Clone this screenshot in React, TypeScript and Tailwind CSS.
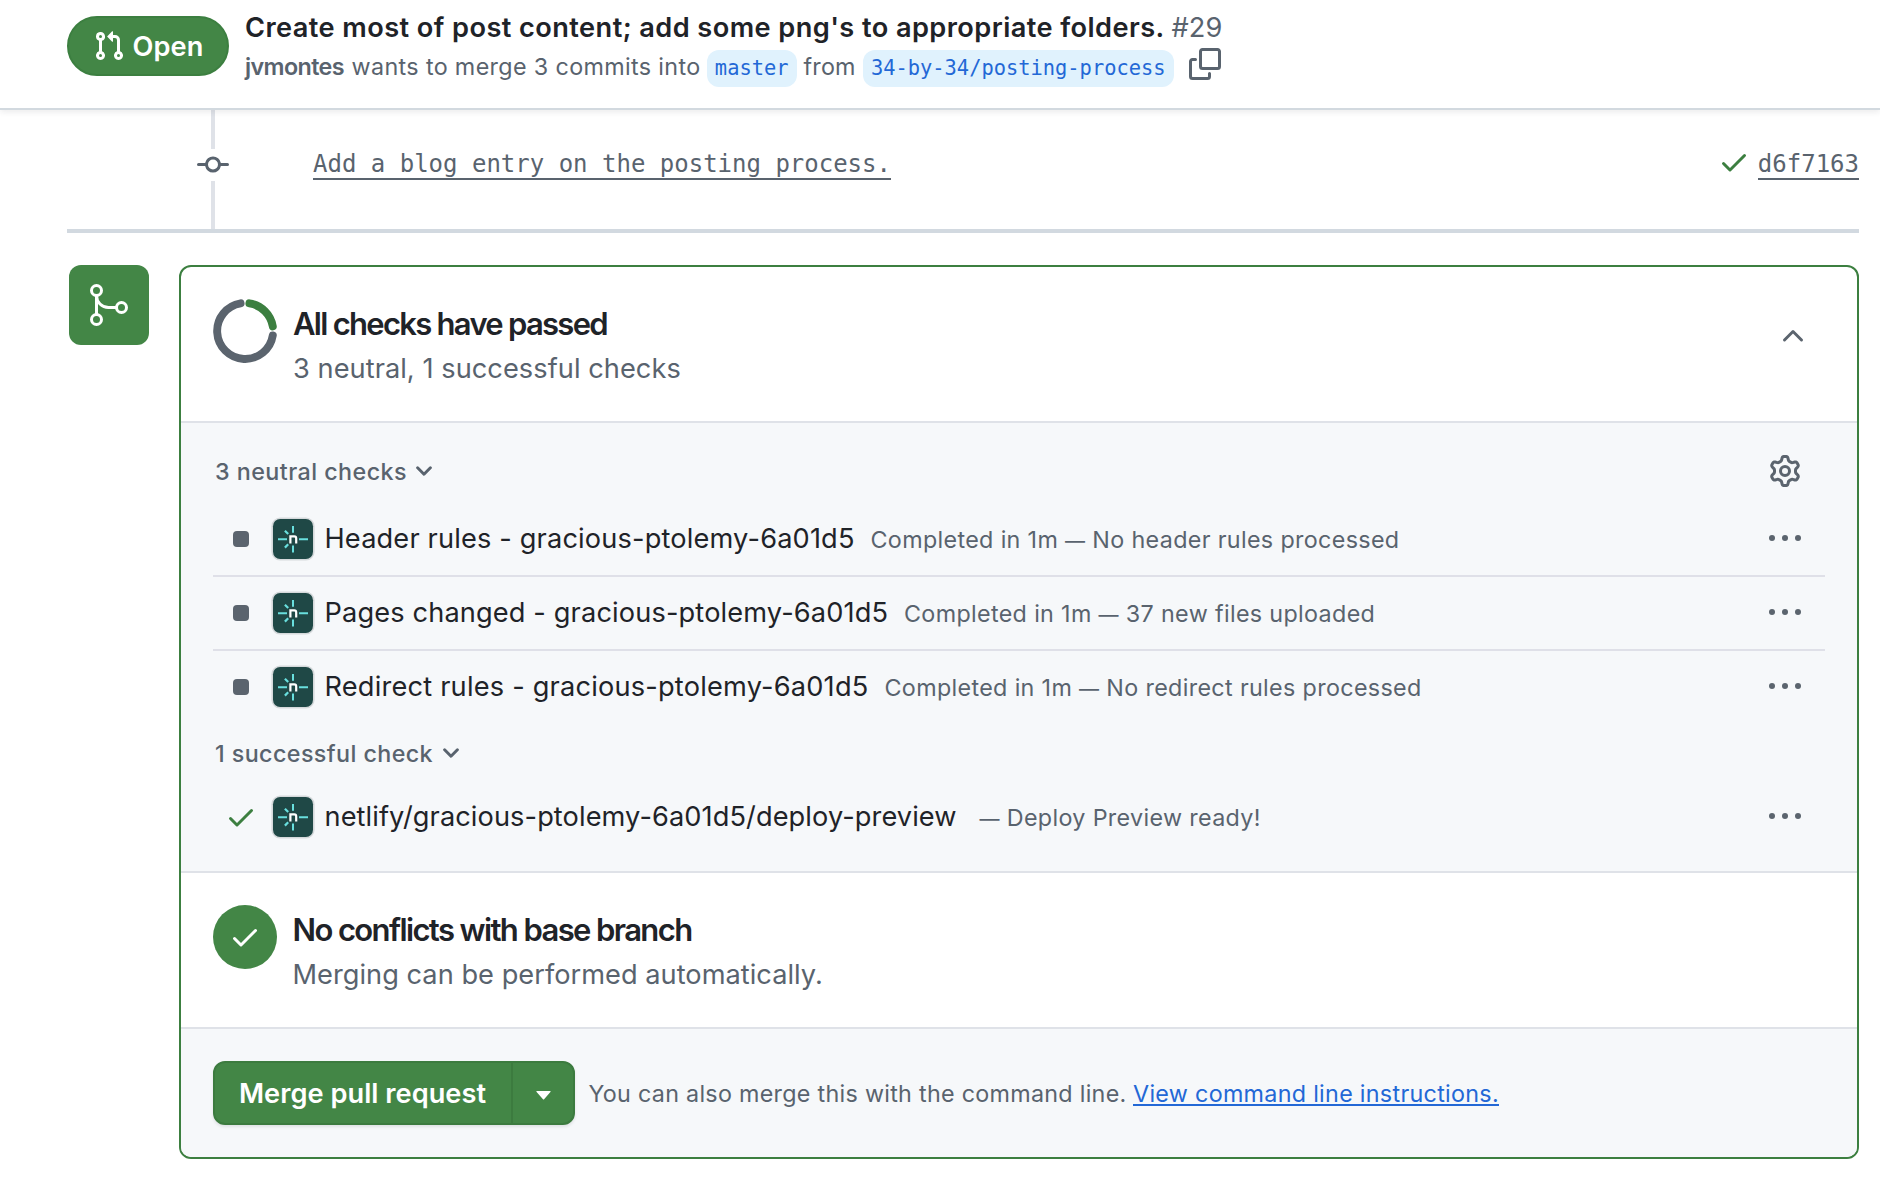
import type { ReactNode } from "react";

const CHECK =
  "M13.78 4.22a.75.75 0 0 1 0 1.06l-7.25 7.25a.75.75 0 0 1-1.06 0L2.22 9.28a.751.751 0 0 1 .018-1.042.751.751 0 0 1 1.042-.018L6 10.94l6.72-6.72a.75.75 0 0 1 1.06 0Z";
const PULL_REQUEST =
  "M1.5 3.25a2.25 2.25 0 1 1 3 2.122v5.256a2.251 2.251 0 1 1-1.5 0V5.372A2.25 2.25 0 0 1 1.5 3.25Zm5.677-.177L9.573.677A.25.25 0 0 1 10 .854V2.5h1A2.5 2.5 0 0 1 13.5 5v5.628a2.251 2.251 0 1 1-1.5 0V5a1 1 0 0 0-1-1h-1v1.646a.25.25 0 0 1-.427.177L7.177 3.427a.25.25 0 0 1 0-.354ZM3.75 2.5a.75.75 0 1 0 0 1.5.75.75 0 0 0 0-1.5Zm0 9.5a.75.75 0 1 0 0 1.5.75.75 0 0 0 0-1.5Zm8.25.75a.75.75 0 1 0 1.5 0 .75.75 0 0 0-1.5 0Z";
const COMMIT =
  "M11.93 8.5a4.002 4.002 0 0 1-7.86 0H.75a.75.75 0 0 1 0-1.5h3.32a4.002 4.002 0 0 1 7.86 0h3.32a.75.75 0 0 1 0 1.5Zm-1.43-.75a2.5 2.5 0 1 0-5 0 2.5 2.5 0 0 0 5 0Z";
const COPY =
  "M0 6.75C0 5.784.784 5 1.75 5h1.5a.75.75 0 0 1 0 1.5h-1.5a.25.25 0 0 0-.25.25v7.5c0 .138.112.25.25.25h7.5a.25.25 0 0 0 .25-.25v-1.5a.75.75 0 0 1 1.5 0v1.5A1.75 1.75 0 0 1 9.25 16h-7.5A1.75 1.75 0 0 1 0 14.25ZM5 1.75C5 .784 5.784 0 6.75 0h7.5C15.216 0 16 .784 16 1.75v7.5A1.75 1.75 0 0 1 14.25 11h-7.5A1.75 1.75 0 0 1 5 9.25Zm1.75-.25a.25.25 0 0 0-.25.25v7.5c0 .138.112.25.25.25h7.5a.25.25 0 0 0 .25-.25v-7.5a.25.25 0 0 0-.25-.25Z";
const CHEVRON_UP =
  "M3.22 10.53a.749.749 0 0 1 0-1.06l4.25-4.25a.749.749 0 0 1 1.06 0l4.25 4.25a.749.749 0 1 1-1.06 1.06L8 6.811 4.28 10.53a.749.749 0 0 1-1.06 0Z";
const GEAR =
  "M8 0a8.2 8.2 0 0 1 .701.031C9.444.095 9.99.645 10.16 1.29l.288 1.107c.018.066.079.158.212.224.231.114.454.243.668.386.123.082.233.09.299.071l1.103-.303c.644-.176 1.392.021 1.82.63.27.385.506.792.704 1.218.315.675.111 1.422-.364 1.891l-.814.806c-.049.048-.098.147-.088.294.016.257.016.515 0 .772-.01.147.038.246.088.294l.814.806c.475.469.679 1.216.364 1.891a7.977 7.977 0 0 1-.704 1.217c-.428.61-1.176.807-1.82.63l-1.102-.302c-.067-.019-.177-.011-.3.071a5.909 5.909 0 0 1-.668.386c-.133.066-.194.158-.211.224l-.29 1.106c-.168.646-.715 1.196-1.458 1.26a8.006 8.006 0 0 1-1.402 0c-.743-.064-1.289-.614-1.458-1.26l-.289-1.106c-.018-.066-.079-.158-.212-.224a5.738 5.738 0 0 1-.668-.386c-.123-.082-.233-.09-.299-.071l-1.103.303c-.644.176-1.392-.021-1.82-.63a8.12 8.12 0 0 1-.704-1.218c-.315-.675-.111-1.422.363-1.891l.815-.806c.05-.048.098-.147.088-.294a6.214 6.214 0 0 1 0-.772c.01-.147-.038-.246-.088-.294l-.815-.806C.635 6.045.431 5.298.746 4.623a7.92 7.92 0 0 1 .704-1.217c.428-.61 1.176-.807 1.82-.63l1.102.302c.067.019.177.011.3-.071.214-.143.437-.272.668-.386.133-.066.194-.158.211-.224l.29-1.106C6.009.645 6.556.095 7.299.03 7.53.01 7.764 0 8 0Zm-.571 1.525c-.036.003-.108.036-.137.146l-.289 1.105c-.147.561-.549.967-.998 1.189-.173.086-.34.183-.5.29-.417.278-.97.423-1.529.27l-1.103-.303c-.109-.03-.175.016-.195.045-.22.312-.412.644-.573.99-.014.031-.021.11.059.19l.815.806c.411.406.562.957.53 1.456a4.709 4.709 0 0 0 0 .582c.032.499-.119 1.05-.53 1.456l-.815.806c-.081.08-.073.159-.059.19.162.346.353.677.573.989.02.03.085.076.195.046l1.102-.303c.56-.153 1.113-.008 1.53.27.161.107.328.204.501.29.447.222.85.629.997 1.189l.289 1.105c.029.109.101.143.137.146a6.6 6.6 0 0 0 1.142 0c.036-.003.108-.036.137-.146l.289-1.105c.147-.561.549-.967.998-1.189.173-.086.34-.183.5-.29.417-.278.97-.423 1.529-.27l1.103.303c.109.029.175-.016.195-.045.22-.313.411-.644.573-.99.014-.031.021-.11-.059-.19l-.815-.806c-.411-.406-.562-.957-.53-1.456a4.709 4.709 0 0 0 0-.582c-.032-.499.119-1.05.53-1.456l.815-.806c.081-.08.073-.159.059-.19a6.464 6.464 0 0 0-.573-.989c-.02-.03-.085-.076-.195-.046l-1.102.303c-.56.153-1.113.008-1.53-.27a4.44 4.44 0 0 0-.501-.29c-.447-.222-.85-.629-.997-1.189l-.289-1.105c-.029-.11-.101-.143-.137-.146a6.6 6.6 0 0 0-1.142 0ZM11 8a3 3 0 1 1-6 0 3 3 0 0 1 6 0ZM9.5 8a1.5 1.5 0 1 0-3.001.001A1.5 1.5 0 0 0 9.5 8Z";

function Octicon({ d, className = "" }: { d: string; className?: string }) {
  return (
    <svg viewBox="0 0 16 16" fill="currentColor" className={`size-8 shrink-0 ${className}`}>
      <path d={d} />
    </svg>
  );
}

function SmallChevron({ className = "" }: { className?: string }) {
  return (
    <svg viewBox="0 0 16 11" fill="none" stroke="currentColor" strokeWidth="2.9" strokeLinecap="round" strokeLinejoin="round" className={`h-[11px] w-4 ${className}`}>
      <path d="M1.6 1.7 8 8.3l6.4-6.6" />
    </svg>
  );
}

function MergeGlyph() {
  return (
    <svg viewBox="0 0 24 24" fill="none" stroke="currentColor" strokeWidth="1.5" className="size-12">
      <circle cx="5.75" cy="4.75" r="2.5" />
      <circle cx="5.75" cy="19.25" r="2.5" />
      <circle cx="18.25" cy="13.25" r="2.5" />
      <path d="M5.75 7.25v9.5M5.75 7.25c0 3.3 2.7 6 6 6h4" />
    </svg>
  );
}

function ChecksRing() {
  return (
    <svg viewBox="0 0 64 64" fill="none" className="size-16 shrink-0">
      <path d="M36.4 4.35A28 28 0 0 1 59.8 27.4" stroke="#3c7f40" strokeWidth="7.9" strokeLinecap="round" />
      <path d="M59.8 36.4A28 28 0 1 1 27.6 4.35" stroke="#5b646e" strokeWidth="7.9" strokeLinecap="round" />
    </svg>
  );
}

function NetlifyAvatar() {
  return (
    <svg viewBox="0 0 42 42" fill="none" className="ml-[-1px] size-[42px] shrink-0 overflow-visible">
      <rect x="-0.6" y="-0.6" width="43.2" height="43.2" rx="8.8" fill="#d5d9db" />
      <rect x="1" y="1" width="40" height="40" rx="7.2" fill="#1f4846" />
      <g stroke="#69dfde" strokeWidth="2">
        <path d="M6 21.2h9M27 21.2h9M21 8v6.8M21 27.4v7.2" />
        <path d="m12.9 12.7 3.3 3.3M12.9 29.6l3.3-3.3" strokeWidth="2.2" />
      </g>
      <path d="M18.4 25.6v-7.2h3.9c1.3 0 1.9.7 1.9 2v5.2" stroke="#fff" strokeWidth="2.2" />
    </svg>
  );
}

function Kebab() {
  return (
    <span className="mb-0.5 ml-auto flex gap-[7px] pr-6">
      <i className="size-1.5 rounded-full bg-[#5b646e]" />
      <i className="size-1.5 rounded-full bg-[#5b646e]" />
      <i className="size-1.5 rounded-full bg-[#5b646e]" />
    </span>
  );
}

type Check = { name: string; nameClass: string; timing: string; detail: string };

const NEUTRAL: Check[] = [
  {
    name: "Header rules - gracious-ptolemy-6a01d5",
    nameClass: "w-[546px] tracking-[0.16px]",
    timing: "Completed in 1m ",
    detail: " No header rules processed",
  },
  {
    name: "Pages changed - gracious-ptolemy-6a01d5",
    nameClass: "w-[579.5px] tracking-[0.14px]",
    timing: "Completed in 1m ",
    detail: " 37 new files uploaded",
  },
  {
    name: "Redirect rules - gracious-ptolemy-6a01d5",
    nameClass: "w-[560px] tracking-[0.2px]",
    timing: "Completed in 1m ",
    detail: " No redirect rules processed",
  },
];

function CheckRow({ check, status, className = "" }: { check: Check; status: ReactNode; className?: string }) {
  return (
    <li className={`flex h-[74px] items-center border-b-2 ${className}`}>
      <span className="flex w-[60px] shrink-0 items-center pl-3">{status}</span>
      <NetlifyAvatar />
      <span className={`ml-[10.5px] shrink-0 whitespace-nowrap text-[27.2px] leading-9 text-[#1f2328] ${check.nameClass}`}>
        {check.name}
      </span>
      <span className="mt-[3px] whitespace-pre text-[23.3px] leading-9 tracking-[0.345px] text-[#59636e]">
        {check.timing}
        <span className="text-[20px]">—</span>
        {check.detail}
      </span>
      <Kebab />
    </li>
  );
}

function Header() {
  return (
    <header className="relative flex h-[110px] items-start border-b-2 border-[#d2d9df] bg-white pl-[67px] shadow-[0_2px_6px_rgba(31,35,40,0.09)]">
      <div className="mt-4 flex h-[60px] w-[162px] items-center rounded-full border-2 border-[#3c7f40] bg-[#438646] pl-6 text-white">
        <Octicon d={PULL_REQUEST} />
        <span className="mt-0.5 ml-[7.5px] text-[27.2px] font-semibold leading-9 tracking-[0.1px]">Open</span>
      </div>
      <div className="ml-4 pt-2.5">
        <h1 className="flex whitespace-nowrap text-[27.2px] leading-9 text-[#1f2328]">
          <span className="font-semibold tracking-[0.417px]">
            Create most of post content; add some png's to appropriate folders.
          </span>
          <span className="ml-[7px] text-[#59636e]">#29</span>
        </h1>
        <div className="mt-1 flex h-[37px] items-start whitespace-nowrap text-[23.3px] leading-[33px] text-[#59636e]">
          <span className="font-semibold tracking-[-0.6px]">jvmontes</span>
          <span className="ml-[7.6px] tracking-[0.36px]">wants to merge 3 commits into</span>
          <BranchName>master</BranchName>
          <span className="ml-[7px] mr-px tracking-[0.175px]">from</span>
          <BranchName>34-by-34/posting-process</BranchName>
          <Octicon d={COPY} className="-mt-0.5 ml-[15px]" />
        </div>
      </div>
    </header>
  );
}

function BranchName({ children }: { children: ReactNode }) {
  return (
    <span className="ml-[6.3px] h-[37px] rounded-xl bg-[#e0f2fd] px-2 font-['DejaVu_Sans_Mono',monospace] text-[20.4px] leading-[37px] text-[#2368d6]">
      {children}
    </span>
  );
}

function CommitRow() {
  return (
    <section className="mr-[21px] ml-[67px] flex h-[123px] border-b-4 border-[#d2d9e0] font-['DejaVu_Sans_Mono',monospace] text-2xl text-[#59636e]">
      <div className="ml-[130px] flex w-8 flex-col items-center">
        <span className="h-[39px] w-1 bg-[#dfe2e8]" />
        <Octicon d={COMMIT} />
        <span className="w-1 flex-1 bg-[#dfe2e8]" />
      </div>
      <a className="mt-[38px] ml-[84px] h-8 border-b-2 border-[#59636e] leading-8">
        Add a blog entry on the posting process.
      </a>
      <Octicon d={CHECK} className="mt-9 ml-auto text-[#3c7f40]" />
      <a className="mt-[38px] ml-2 h-8 border-b-2 border-[#59636e] leading-8">d6f7163</a>
    </section>
  );
}

function GroupTitle({ children, className = "" }: { children: ReactNode; className?: string }) {
  return (
    <h3 className={`flex items-center whitespace-nowrap text-[23.3px] font-medium leading-8 text-[#59636e] ${className}`}>
      {children}
    </h3>
  );
}

function MergePanel() {
  return (
    <div className="h-[894px] w-[1680px] overflow-hidden rounded-xl border-2 border-[#3c7f40] bg-white">
      <section className="flex h-[154px] items-start pt-8 pl-8">
        <ChecksRing />
        <div className="ml-4 whitespace-nowrap">
          <h2 className="mt-[7px] text-[31px] font-semibold leading-9 tracking-[-1.72px] text-[#1f2328]">
            All checks have passed
          </h2>
          <p className="mt-[9px] text-[27.2px] leading-9 tracking-[0.051px] text-[#59636e]">
            3 neutral, 1 successful checks
          </p>
        </div>
        <Octicon d={CHEVRON_UP} className="mt-[21px] mr-12 ml-auto text-[#5b646e]" />
      </section>

      <section className="h-[452px] border-y-2 border-[#dfe2e8] bg-[#f6f8fa] pr-8 pl-8">
        <div className="flex items-start justify-between">
          <GroupTitle className="mt-[32.5px] ml-[2px] tracking-[0.447px]">
            3 neutral checks
            <SmallChevron className="ml-[9px]" />
          </GroupTitle>
          <Octicon d={GEAR} className="mt-8 mr-6 text-[#5b646e]" />
        </div>
        <ul className="mt-[15.5px]">
          {NEUTRAL.map((check, i) => (
            <CheckRow
              key={check.name}
              check={check}
              status={<span className="ml-2 size-4 rounded-[4px] bg-[#5b646e]" />}
              className={i < 2 ? "border-[#dfe0e8]" : "border-transparent"}
            />
          ))}
        </ul>
        <GroupTitle className="mt-[12.5px] ml-[2px] tracking-[0.41px]">
          1 successful check
          <SmallChevron className="ml-[10px]" />
        </GroupTitle>
        <ul className="mt-[11px]">
          <CheckRow
            check={{
              name: "netlify/gracious-ptolemy-6a01d5/deploy-preview",
              nameClass: "w-[655px] tracking-[0.09px]",
              timing: "",
              detail: " Deploy Preview ready!",
            }}
            status={<Octicon d={CHECK} className="text-[#3c7f40]" />}
            className="border-transparent"
          />
        </ul>
      </section>

      <section className="flex h-[154px] items-start pt-8 pl-8">
        <span className="flex size-16 items-center justify-center rounded-full bg-[#438646] text-white">
          <Octicon d={CHECK} />
        </span>
        <div className="ml-[15.5px] whitespace-nowrap">
          <h2 className="mt-[7px] text-[31px] font-semibold leading-9 tracking-[-1.61px] text-[#1f2328]">
            No conflicts with base branch
          </h2>
          <p className="mt-[9px] text-[27.2px] leading-9 tracking-[0.027px] text-[#59636e]">
            Merging can be performed automatically.
          </p>
        </div>
      </section>

      <section className="flex h-[130px] items-start border-t-2 border-[#dfe2e8] bg-[#f6f8fa] pt-8 pl-8 text-[23.3px] text-[#59636e]">
        <div className="flex h-16 w-[362px] rounded-xl border-2 border-[#3c7b3f] bg-[#438646] text-white shadow-[0_2px_3px_rgba(31,35,40,0.1)]">
          <button className="w-[298px] border-r-2 border-[#3c7b3f] pt-0.5 pl-6 text-left text-[27.2px] font-semibold tracking-[0.03px]">
            Merge pull request
          </button>
          <button className="flex flex-1 items-center justify-center">
            <svg viewBox="0 0 15 9" fill="currentColor" className="mt-1 h-[9px] w-[15px]">
              <path d="M1 0h13c.6 0 .8.6.4 1L8.1 8.2c-.3.3-.8.3-1.1 0L.6 1C.2.6.4 0 1 0Z" />
            </svg>
          </button>
        </div>
        <p className="mt-[17px] ml-[13.5px] whitespace-nowrap leading-8">
          <span className="tracking-[0.288px]">You can also merge this with the command line.</span>
        </p>
        <a className="mt-[17px] ml-[6.5px] h-7 whitespace-nowrap border-b-2 border-[#2368d6] leading-8 tracking-[0.3px] text-[#2368d6]">
          View command line instructions.
        </a>
      </section>
    </div>
  );
}

export default function App() {
  return (
    <div className="h-[1184px] w-[1880px] overflow-hidden bg-white font-[Inter,sans-serif]">
      <Header />
      <CommitRow />
      <main className="mt-8 ml-[69px] flex items-start gap-[30px]">
        <div className="flex size-20 items-center justify-center rounded-xl bg-[#438646] text-white">
          <MergeGlyph />
        </div>
        <MergePanel />
      </main>
    </div>
  );
}
